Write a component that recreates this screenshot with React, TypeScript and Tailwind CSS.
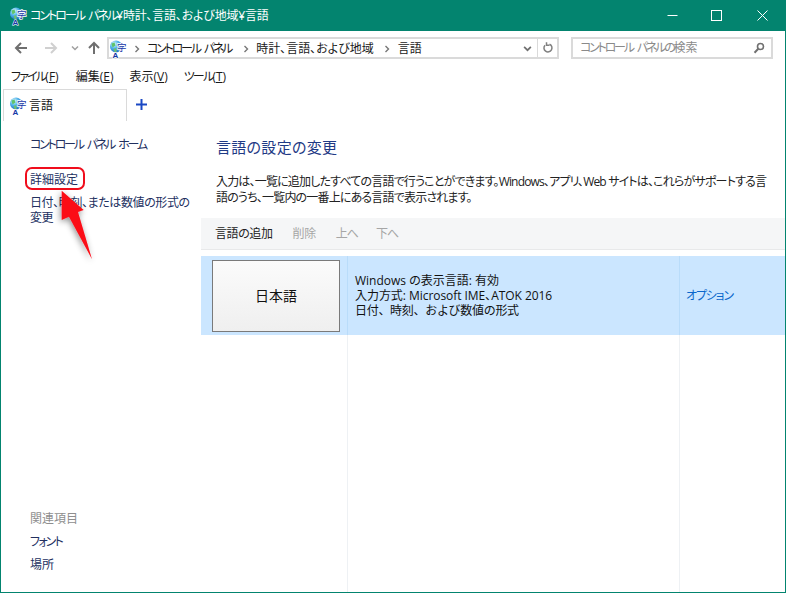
const FONT = "font-['Open_Sans','Noto_Sans_CJK_JP',sans-serif]"

// Globe + 字 icon used by the title bar, address bar and tab
function LangIcon({ id }: { id: string }) {
  return (
    <svg width="20" height="20" viewBox="0 0 20 20" className="shrink-0">
      <defs>
        <radialGradient id={id} cx="0.35" cy="0.3" r="0.8">
          <stop offset="0" stopColor="#e8fbff" />
          <stop offset="0.45" stopColor="#4fb2ea" />
          <stop offset="1" stopColor="#1a5fb8" />
        </radialGradient>
      </defs>
      <circle cx="7" cy="7.5" r="6" fill={`url(#${id})`} />
      <path d="M2.5 4.5 L5.5 3.5 L6.5 6.5 L3.5 8.5 Z" fill="#5fc46a" />
      <path d="M4.5 10 L7.5 9 L7.5 13 L5.5 13 Z" fill="#6cc06f" />
      <text x="8" y="12" fontSize="9.5" fill="#1537a8" stroke="#fff" strokeWidth="1.4" paintOrder="stroke" className="font-['Noto_Sans_CJK_JP']">字</text>
      <text x="3.5" y="19" fontSize="8" fontWeight="700" fill="#1537a8" stroke="#fff" strokeWidth="1" paintOrder="stroke" className="font-['Liberation_Sans']">A</text>
    </svg>
  )
}

function Arrow({ dir, color }: { dir: 'left' | 'right' | 'up'; color: string }) {
  const d = dir === 'left' ? 'M13 7H2M7 2L2 7l5 5' : dir === 'right' ? 'M1 7h11M7 2l5 5-5 5' : 'M7 13V2M2 7l5-5 5 5'
  return (
    <svg width="14" height="14" viewBox="0 0 14 14" fill="none" stroke={color} strokeWidth="2">
      <path d={d} />
    </svg>
  )
}

function Chevron({ color = '#8a8a8a', size = 8 }: { color?: string; size?: number }) {
  return (
    <svg width={size} height={size} viewBox="0 0 8 8" fill="none" stroke={color} strokeWidth="1.5">
      <path d="M1 2.5l3 3 3-3" />
    </svg>
  )
}

function Crumb() {
  return (
    <svg width="6" height="8" viewBox="0 0 6 8" fill="none" stroke="#777" strokeWidth="1.4" className="shrink-0">
      <path d="M1.5 1l3 3-3 3" />
    </svg>
  )
}

function MenuItem({ label, hot, className, kana }: { label: string; hot: string; className: string; kana?: boolean }) {
  return (
    <span className={className}>
      <span className={kana ? 'tracking-[-1.8px]' : ''}>{label}</span>(<span className="underline">{hot}</span>)
    </span>
  )
}

export default function App() {
  return (
    <div className={`${FONT} [font-feature-settings:'palt'] w-[786px] h-[593px] flex flex-col overflow-hidden bg-white border border-t-0 border-[#03846f] text-xs text-[#1a1a1a] relative`}>
      {/* Title bar */}
      <div className="h-[31px] shrink-0 -mx-px bg-[#03846f] flex items-center text-white pl-[9px]">
        <LangIcon id="g1" />
        <span className="ml-[1px] tracking-[-0.2px] mt-[1px]">
          <span className="tracking-[-2px] [word-spacing:3px]">コントロール パネル</span>¥時計、言語、および地域¥言語
        </span>
        <div className="ml-auto flex items-center pr-[18px]">
          <svg width="11" height="11" viewBox="0 0 11 11" stroke="#fff" fill="none" className="mr-[33px]">
            <path d="M0.5 5.5h10" />
          </svg>
          <svg width="11" height="11" viewBox="0 0 11 11" stroke="#fff" fill="none" className="mr-[35px]">
            <rect x="0.5" y="0.5" width="10" height="10" />
          </svg>
          <svg width="11" height="11" viewBox="0 0 11 11" stroke="#fff" fill="none">
            <path d="M0.5 0.5l10 10M10.5 0.5l-10 10" />
          </svg>
        </div>
      </div>

      {/* Navigation row */}
      <div className="h-[34px] shrink-0 flex items-start pt-[6px]">
        <div className="w-[106px] h-[22px] flex items-center shrink-0 pl-[13px]">
          <Arrow dir="left" color="#6f6f6f" />
          <span className="w-[16px]" />
          <Arrow dir="right" color="#d0d0d0" />
          <span className="w-[13px]" />
          <Chevron color="#a0a0a0" />
          <span className="w-[8px]" />
          <Arrow dir="up" color="#6f6f6f" />
        </div>
        <div className="w-[452px] h-[22px] border-2 border-[#dadada] flex items-center shrink-0">
          <div className="flex items-center flex-1 pt-[1px]">
            <LangIcon id="g2" />
            <span className="w-[5px]" />
            <Crumb />
            <span className="ml-[7px] tracking-[-2.2px] [word-spacing:3px]">コントロール パネル</span>
            <span className="w-[12px]" />
            <Crumb />
            <span className="ml-[7px]">時計、言語、および地域</span>
            <span className="w-[10px]" />
            <Crumb />
            <span className="ml-[8px]">言語</span>
          </div>
          <span className="mr-[5px]">
            <Chevron color="#707070" size={9} />
          </span>
          <div className="w-[20px] h-full border-l border-[#dadada] flex items-center justify-center">
            <svg width="12" height="12" viewBox="0 0 12 12" fill="none" stroke="#808080" strokeWidth="1.5">
              <path d="M7.5 2.2A4 4 0 1 1 3 3.2" />
              <path d="M3 0.5v3h3" transform="translate(1.5 -0.3)" />
            </svg>
          </div>
        </div>
        <div className="ml-[12px] w-[202px] h-[22px] border-2 border-[#dadada] flex items-center pl-[7px] pr-[6px] shrink-0 text-[#8a8a8a]">
          <span>
            <span className="tracking-[-2.2px] [word-spacing:3px]">コントロール パネルの</span>検索
          </span>
          <svg width="12" height="12" viewBox="0 0 12 12" fill="none" stroke="#707070" strokeWidth="1.6" className="ml-auto">
            <circle cx="7.5" cy="4.5" r="3" />
            <path d="M5.3 6.8L1.5 10.7" strokeWidth="2" />
          </svg>
        </div>
      </div>

      {/* Menu */}
      <div className="h-[23px] shrink-0 flex items-center pt-[1px]">
        <MenuItem label="ファイル" hot="F" kana className="ml-[10px]" />
        <MenuItem label="編集" hot="E" className="ml-[17px]" />
        <MenuItem label="表示" hot="V" className="ml-[16px]" />
        <MenuItem label="ツール" hot="T" kana className="ml-[16px]" />
      </div>

      {/* Tab strip */}
      <div className="h-[32px] shrink-0 flex items-center pl-[2px] mt-[1px]">
        <div className="w-[124px] h-full border border-b-0 border-[#dadada] flex items-center pl-[5px]">
          <LangIcon id="g3" />
          <span className="text-[#111] mt-[1px]">言語</span>
        </div>
        <svg width="11" height="11" viewBox="0 0 11 11" stroke="#1a48c4" strokeWidth="2" className="ml-[9px] -mt-[1px]">
          <path d="M5.5 0v11M0 5.5h11" />
        </svg>
      </div>

      {/* Body */}
      <div className="flex-1 flex min-h-0">
        <aside className="w-[200px] shrink-0 flex flex-col pl-[29px] text-[#22305f]">
          <div className="mt-[16px] tracking-[-2.2px] [word-spacing:3px]">コントロール パネル ホーム</div>
          <div className="mt-[19px]">詳細設定</div>
          <div className="mt-[7px] leading-[15px] tracking-[-0.4px] whitespace-nowrap">
            日付、時刻、または数値の形式の
            <br />
            変更
          </div>
          <div className="mt-auto text-[#8e8e8e]">関連項目</div>
          <div className="mt-[7px] tracking-[-1.8px]">フォント</div>
          <div className="mt-[7px] mb-[19px]">場所</div>
        </aside>
        <main className="flex-1 min-w-0 flex flex-col">
          <h1 className="mt-[15px] ml-[15px] text-[15px] font-normal leading-[22px] tracking-[0.3px] text-[#1f3a85]">言語の設定の変更</h1>
          <p className="mt-[16px] ml-[15px] leading-[16px] text-[#222] tracking-[-0.82px] whitespace-nowrap">
            入力は、一覧に追加したすべての言語で行うことができます。Windows、アプリ、Web サイトは、これらがサポートする言
            <br />
            語のうち、一覧内の一番上にある言語で表示されます。
          </p>
          <div className="mt-[12px] h-[32px] shrink-0 bg-[#f5f6f7] border-b border-[#e8e9ea] flex items-center pl-[14px] gap-[20px] text-[#a6a6a6] tracking-[-0.4px]">
            <span className="text-[#222]">言語の追加</span>
            <span>削除</span>
            <span className="tracking-[-1px]">上へ</span>
            <span className="tracking-[-1px] -ml-[2px]">下へ</span>
          </div>
          <div className="flex-1 flex min-h-0 pt-[6px]">
            <div className="w-[147px] shrink-0 flex flex-col border-r border-[#eef1f4]">
              <div className="h-[79px] bg-[#cbe6ff] border-r border-[#b9dcfa] -mr-px flex items-center pl-[11px]">
                <button className="w-[128px] h-[72px] border-[1.5px] border-[#7a7a7a] bg-gradient-to-b from-[#fbfbfb] to-[#efefef] text-sm text-[#111]">日本語</button>
              </div>
            </div>
            <div className="w-[332px] shrink-0 flex flex-col border-r border-[#eef1f4]">
              <div className="h-[79px] bg-[#cbe6ff] border-r border-[#b9dcfa] -mr-px flex flex-col justify-center pl-[7px] leading-[15px] text-[#111]">
                <div>Windows の表示言語: 有効</div>
                <div className="tracking-[-0.05px]">入力方式: Microsoft IME、ATOK 2016</div>
                <div className="[font-feature-settings:normal] tracking-[-0.3px]">日付、時刻、および数値の形式</div>
              </div>
            </div>
            <div className="flex-1 flex flex-col">
              <div className="h-[79px] bg-[#cbe6ff] flex items-center pl-[6px] text-[#0a66cc] tracking-[-1.2px]">オプション</div>
            </div>
          </div>
        </main>
      </div>

      {/* Red callout annotation */}
      <div className="absolute left-[24px] top-[167px] w-[60px] h-[23px] rounded-[7px] border-2 border-[#f00d1c]" />
      <svg width="110" height="90" viewBox="0 0 110 90" className="absolute left-[-1px] top-[185px]">
        <defs>
          <filter id="sh" x="-40%" y="-20%" width="180%" height="150%">
            <feDropShadow dx="-1" dy="2" stdDeviation="3" floodColor="#000" floodOpacity="0.45" />
          </filter>
        </defs>
        <path d="M61.7 5.7L83.7 25L78 27L92 74.3L69 31.7L61.7 35Z" fill="#fb0b16" filter="url(#sh)" />
      </svg>
    </div>
  )
}
